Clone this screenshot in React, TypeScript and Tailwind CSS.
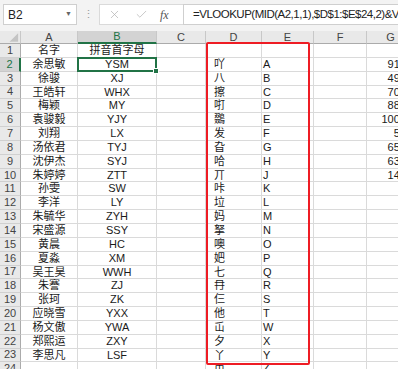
import { X, Check } from "lucide-react";

const widths = ["w-[21px]", "w-[57px]", "w-[79px]", "w-[49px]", "w-[56px]", "w-[52px]", "w-[53px]", "w-[48px]"];
const heads = ["", "A", "B", "C", "D", "E", "F", "G"];

const names = ["名字", "余思敏", "徐骏", "王皓轩", "梅颖", "袁骏毅", "刘翔", "汤依君", "沈伊杰", "朱婷婷", "孙雯", "李洋", "朱毓华", "宋盛源", "黄晨", "夏淼", "吴王昊", "朱謇", "张珂", "应晓雪", "杨文傲", "郑熙运", "李思凡", ""];
const codes = ["拼音首字母", "YSM", "XJ", "WHX", "MY", "YJY", "LX", "TYJ", "SYJ", "ZTT", "SW", "LY", "ZYH", "SSY", "HC", "XM", "WWH", "ZJ", "ZK", "YXX", "YWA", "ZXY", "LSF", ""];
const hanzi = ["", "吖", "八", "擦", "咑", "鵽", "发", "旮", "哈", "丌", "咔", "垃", "妈", "拏", "噢", "妑", "七", "冄", "仨", "他", "屲", "夕", "丫", "帀"];
const letters = ["", "A", "B", "C", "D", "E", "F", "G", "H", "J", "K", "L", "M", "N", "O", "P", "Q", "R", "S", "T", "W", "X", "Y", "Z"];
const nums = ["", "9136", "4978", "7025", "8863", "10024", "512", "6547", "6381", "1492"];

const cell = "shrink-0 box-border border-r border-b border-[#dadada] h-full overflow-hidden whitespace-nowrap leading-[13px] relative";

export default function App() {
  return (
    <div
      className="relative w-[398px] h-[369px] overflow-hidden bg-white text-[11px] text-[#1a1a1a]"
      style={{ fontFamily: '"Liberation Sans", "Noto Sans CJK SC", sans-serif' }}
    >
      {/* formula bar */}
      <div className="h-[31px] bg-[#f3f3f3] flex items-start pt-[4px] pl-[3px]">
        <div className="w-[74px] h-[21px] bg-white border border-[#cfcfcf] flex items-center justify-between px-[4px] text-[12px] text-[#222]">
          <span>B2</span>
          <span className="text-[7px] text-[#666]">▼</span>
        </div>
        <div className="w-[22px] h-[21px] flex items-center justify-center text-[#9a9a9a] text-[11px]">⋮</div>
        <div className="w-[84px] h-[21px] bg-white border border-r-0 border-[#dadada] flex items-center text-[#b0b0b0]">
          <X size={13} strokeWidth={1.3} className="ml-[8px]" />
          <Check size={13} strokeWidth={1.3} className="ml-[14px]" />
          <span className="ml-[12px] italic text-[12px] text-[#555]" style={{ fontFamily: '"Liberation Serif", serif' }}>
            fx
          </span>
        </div>
        <div className="flex-1 h-[21px] bg-white border border-r-0 border-[#cfcfcf] flex items-center pl-[9px] text-[11.5px] tracking-[-0.5px] text-[#222] whitespace-nowrap overflow-hidden">
          =VLOOKUP(MID(A2,1,1),$D$1:$E$24,2)&VLOOKUP(MID(A2,2,1),$D$1:$E$24,2)
        </div>
      </div>

      {/* column headers */}
      <div className="flex h-[13px] bg-[#e9e9e9]">
        {heads.map((h, i) => (
          <div
            key={i}
            className={`${widths[i]} shrink-0 box-border h-full flex items-center justify-center border-r border-[#c8c8c8] ${
              i === 2 ? "bg-[#d3d3d3] text-[#217346] border-b-2 border-b-[#217346]" : "border-b border-b-[#ababab] text-[#444]"
            }`}
          >
            {i === 0 ? (
              <svg width="21" height="13" viewBox="0 0 21 13">
                <polygon points="19,2 19,11 10,11" fill="#c4c4c4" />
              </svg>
            ) : (
              h
            )}
          </div>
        ))}
      </div>

      {/* rows */}
      {names.map((n, r) => (
        <div key={r} className="flex h-[13.85px]">
          <div
            className={`${widths[0]} shrink-0 box-border h-full flex items-center justify-center leading-[13px] ${
              r === 1
                ? "bg-[#d3d3d3] text-[#217346] border-r-2 border-r-[#217346] border-b border-b-[#c8c8c8]"
                : "bg-[#e9e9e9] text-[#444] border-r border-r-[#ababab] border-b border-b-[#d0d0d0]"
            }`}
          >
            {r + 1}
          </div>
          <div className={`${widths[1]} ${cell} text-center`}>{n}</div>
          <div className={`${widths[2]} ${cell} text-center ${r === 1 ? "overflow-visible z-10" : ""}`}>
            {codes[r]}
            {r === 1 && (
              <>
                <div className="absolute -left-[1px] -top-[1px] -right-[1px] -bottom-[1px] border-2 border-[#217346]" />
                <div className="absolute -right-[3px] -bottom-[3px] w-[6px] h-[6px] bg-[#217346] border border-white" />
              </>
            )}
          </div>
          <div className={`${widths[3]} ${cell}`} />
          <div className={`${widths[4]} ${cell} pl-[8px]`}>{hanzi[r]}</div>
          <div className={`${widths[5]} ${cell} pl-[1px]`}>{letters[r]}</div>
          <div className={`${widths[6]} ${cell}`} />
          <div className={`${widths[7]} ${cell} text-right pr-[2px]`}>{nums[r] ?? ""}</div>
        </div>
      ))}

      {/* red annotation box */}
      <div className="absolute left-[206px] top-[42px] w-[104px] h-[323px] border-2 border-[#ee1c24] rounded-[2px] pointer-events-none" />
    </div>
  );
}
